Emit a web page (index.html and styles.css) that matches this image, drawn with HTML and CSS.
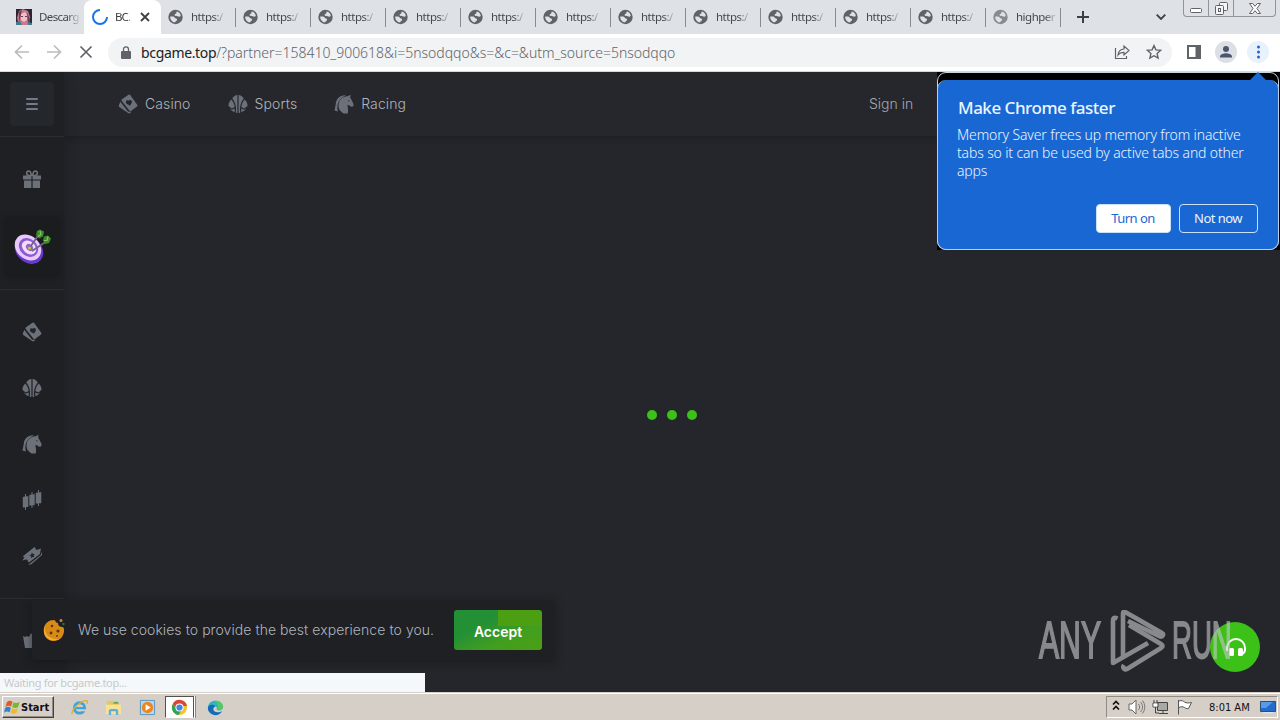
FILE: index.html
```
<!DOCTYPE html>
<html lang="en">

<head>
    <meta charset="UTF-8">
    <meta name="viewport" content="width=device-width, initial-scale=1.0">
    <title>BC.GAME</title>
    <link rel="stylesheet" href="styles.css">
</head>

<body>
    <!-- shared icons -->
    <svg class="sprite" aria-hidden="true">
        <symbol id="globe" viewBox="0 0 16 16">
            <circle cx="7.500" cy="8" r="7.200" fill="currentColor"/>
            <path d="M2.200 7.500c1.500.2 2.600-.2 3.600.3 1.100.5 1 1.600 2.200 1.700 1.200.2 1.300 1 .8 1.900-.5.800-1.500.8-1.700 2.100C4.300 13.200 2 10.700 2.200 7.500zM8.700 2.600c2.200.5 3.900 2.200 4.100 4.400-1.200.9-2 .7-3.200.2-.9-.4-2.600-.1-3-1-.4-1 1-1 1.600-1.600.5-.5 0-1.200.5-2z" fill="#dee1e6"/>
        </symbol>
        <symbol id="cards" viewBox="0 0 20 20">
            <path d="M2.300 7.700.8 11.600c-.2.600 0 1.100.5 1.500l8.800 6c.6.400 1.200.4 1.800 0l1.900-1.400-3 .1c-.6 0-1-.2-1.300-.7z" fill="currentColor"/>
            <path d="M4 5.200 10.500.8c.6-.4 1.300-.3 1.700.3l7 9.700c.4.600.3 1.200-.2 1.700l-6 4.400c-.6.400-1.300.3-1.700-.3L3.700 7c-.4-.7-.3-1.300.3-1.800z" fill="currentColor"/>
            <path d="M8.200 9.200c-1.100-2 .9-3.800 2.500-2.400 1.200-1.700 3.700-.6 3.200 1.500-.3 1.200-1.300 2-1.900 3.400-1.300-1-3-1.200-3.800-2.500z" class="cut"/>
        </symbol>
        <symbol id="ball" viewBox="0 0 20 20">
            <path d="M9.400 1v18l-1.600-.3c.8-5-.2-10.200-3.500-14.100C5.700 2.300 7.200 1.200 9.400 1zM10.600 1v18l1.600-.3c-.8-5 .2-10.200 3.500-14.100C14.300 2.300 12.800 1.200 10.600 1z" fill="currentColor"/>
            <path d="M3.300 5.500c2 2.300 3.100 4.800 3.400 7.500l-2.900 1.500L.5 12C.3 9.500 1.400 7.200 3.300 5.500zM16.700 5.500c-2 2.300-3.100 4.800-3.400 7.500l2.900 1.500 3.300-2.500c.2-2.500-.9-4.800-2.800-6.500zM1.600 14.200l2 1.600 3.100-1.400v3.800c-2-.7-4.100-2.200-5.100-4zM18.400 14.200l-2 1.600-3.100-1.400v3.800c2-.7 4.100-2.200 5.100-4z" fill="currentColor"/>
        </symbol>
        <symbol id="horse" viewBox="0 0 20 20">
            <path d="M6.500 5.500c2.200-2.700 5-3.400 7.200-3.300L16.500.7l-.3 3c1.500 1.700 2.100 4.100 3.300 6.200.4 1-.3 2.600-1.400 2.800-1.800.2-2.700-1.500-4.600-1.900 0 3.300 1.300 4.800.2 8.600h-4C6.500 17.500 4.400 15.500 4.500 11.500c0-2.500.8-4.500 2-6z" fill="currentColor"/>
            <path d="M12 1.200C6.300.6 2 4.500 1.800 9.800L.5 16.500l3.500 1C2.200 12 4 4.500 12 1.200z" fill="currentColor"/>
            <path d="m14 6.100 2 .8-1.300.6z" class="cut"/>
        </symbol>
        <symbol id="candles" viewBox="0 0 20 20">
            <path d="M3 4h1v2.400l2.300-.4v11H4v3H3v-2.500H.800V7L3 6.600zM9.500 2h1v2.400l2.200-.4v11.200h-2.200V18h-1v-2.400h-2.200V5l2.200-.4zM16 0h1v2.400l2.300-.4v11.300H17V16h-1v-2.500h-2.300V3l2.300-.4z" fill="currentColor"/>
        </symbol>
        <symbol id="ticket" viewBox="0 0 20 20">
            <path d="M.5 10.500 12.500 1l1 1.300c-.2 1 .8 1.900 1.900 1.500l3.500-1.300-1 5.500L7 16.600l-1.300-1.500c.2-1-.8-1.900-1.800-1.500L.5 14.500l2-3.600z" fill="currentColor"/>
            <path d="M6 18.500h3L20 9V5.500L18.700 9 8 17.500z" fill="currentColor"/>
            <path d="m10 6.500.9 1.600 1.900-.2-1.100 1.600.6 1.600-1.800-.2-1.300 1.300-.2-1.900-1.700-.7 1.700-.9z" class="cut"/>
        </symbol>
    </svg>

    <div class="tab-strip">
        <div class="tab tab-first">
            <svg class="favicon" viewBox="0 0 16 16">
                <path fill="#2c2535" d="M0 0h16v16H0z"/>
                <path fill="#c6798f" d="M3 2 7 0l5 2 2 6-1 8H3L1 9z"/>
                <path fill="#efc0c0" d="M5 5l4-2 2 3v5l-3 2-3-2z"/>
                <path fill="#673c58" d="M5 7h2v1H5zM9 7h2v1H9zM3 3l3-2-2 8-1 5zM11 3l3 8-2 4z"/>
                <path fill="#47798c" d="M0 13l4-1 2 4H0zM12 13l4 1v2h-4z"/>
            </svg>
            <span class="tab-name">Descarg</span>
        </div>
        <div class="tab tab-active">
            <svg class="favicon spinner" viewBox="0 0 16 16"><path d="M8 1a7 7 0 1 0 7 7" fill="none" stroke="#1a73e8" stroke-width="2"/></svg>
            <span class="tab-name">BC.</span>
            <svg class="tab-close" viewBox="0 0 10 10"><path d="m1 1 8 8M9 1 1 9" stroke="#3c4043" stroke-width="1.800"/></svg>
        </div>
        <div class="tab"><svg class="favicon"><use href="#globe"/></svg><span class="tab-name">https:/</span></div>
        <div class="tab"><svg class="favicon"><use href="#globe"/></svg><span class="tab-name">https:/</span></div>
        <div class="tab"><svg class="favicon"><use href="#globe"/></svg><span class="tab-name">https:/</span></div>
        <div class="tab"><svg class="favicon"><use href="#globe"/></svg><span class="tab-name">https:/</span></div>
        <div class="tab"><svg class="favicon"><use href="#globe"/></svg><span class="tab-name">https:/</span></div>
        <div class="tab"><svg class="favicon"><use href="#globe"/></svg><span class="tab-name">https:/</span></div>
        <div class="tab"><svg class="favicon"><use href="#globe"/></svg><span class="tab-name">https:/</span></div>
        <div class="tab"><svg class="favicon"><use href="#globe"/></svg><span class="tab-name">https:/</span></div>
        <div class="tab"><svg class="favicon"><use href="#globe"/></svg><span class="tab-name">https:/</span></div>
        <div class="tab"><svg class="favicon"><use href="#globe"/></svg><span class="tab-name">https:/</span></div>
        <div class="tab"><svg class="favicon"><use href="#globe"/></svg><span class="tab-name">https:/</span></div>
        <div class="tab"><svg class="favicon faded"><use href="#globe"/></svg><span class="tab-name">highper</span></div>
        <svg class="new-tab" viewBox="0 0 12 12"><path d="M6 0v12M0 6h12" stroke="#3c4043" stroke-width="2"/></svg>
        <svg class="tab-search" viewBox="0 0 10 6"><path d="m.7.700 4.300 4.300L9.300.7" fill="none" stroke="#3c4043" stroke-width="1.800"/></svg>
        <div class="window-buttons">
            <span><svg width="12" height="5"><rect x=".5" y=".5" width="11" height="4" rx="1" fill="#fff" stroke="#606369"/></svg></span>
            <span><svg width="13" height="13" fill="#f4f5f7" stroke="#606369"><rect x="4.500" y=".5" width="8" height="8" rx="1"/><rect x=".5" y="3.500" width="8" height="9" rx="1"/><rect x="3.500" y="6.500" width="2" height="3"/></svg></span>
            <span class="wide"><svg width="12" height="11"><path d="M.5.500h3.200L6 3.300 8.300.500h3.200L7.900 5.500l3.600 5H8.300L6 7.700l-2.300 2.800H.5l3.600-5z" fill="#fff" stroke="#606369"/></svg></span>
        </div>
    </div>

    <div class="toolbar">
        <svg class="nav-icon" viewBox="0 0 16 16"><path d="M15 8H2M8 1.500 1.500 8 8 14.500" stroke="#babcbe"/></svg>
        <svg class="nav-icon" viewBox="0 0 16 16"><path d="M1 8h13M8 1.500 14.500 8 8 14.500" stroke="#babcbe"/></svg>
        <svg class="nav-icon nav-stop" viewBox="0 0 16 16"><path d="m2.500 2.500 11 11M13.500 2.500l-11 11" stroke="#5f6368"/></svg>
        <div class="omnibox">
            <svg class="lock" viewBox="0 0 10 13"><path d="M1 5h8a1 1 0 0 1 1 1v6a1 1 0 0 1-1 1H1a1 1 0 0 1-1-1V6a1 1 0 0 1 1-1z" fill="#5f6368"/><path d="M2.500 6V3.300a2.500 2.500 0 0 1 5 0V6" fill="none" stroke="#5f6368" stroke-width="1.300"/></svg>
            <div class="url"><b>bcgame.top</b>/?partner=158410_900618&amp;i=5nsodqqo&amp;s=&amp;c=&amp;utm_source=5nsodqqo</div>
            <svg class="share" viewBox="0 0 16 16" fill="none" stroke="#5f6368" stroke-width="1.200"><path d="M1.500 4v10.500h11V12M4 11c.5-4 2.500-5.800 6-6V2l5 4.500-5 4.500V8.300C7.500 8.300 5.500 9 4 11z"/></svg>
            <svg class="star" viewBox="0 0 16 16"><path d="m8 1.600 1.900 4.300 4.700.5-3.500 3.100 1 4.600L8 11.700l-4.100 2.400 1-4.600-3.500-3.100 4.700-.5z" fill="none" stroke="#5f6368" stroke-width="1.400"/></svg>
        </div>
        <svg class="side-panel" viewBox="0 0 14 14"><path d="M1 1h12v12H1z" fill="none" stroke="#5f6368" stroke-width="2"/><path d="M8.500 1H13v12H8.500z" fill="#5f6368"/></svg>
        <svg class="profile" viewBox="0 0 22 22"><circle cx="11" cy="11" r="11" fill="#dcdfe4"/><circle cx="11" cy="8" r="3" fill="#4b5470"/><path d="M5 16.500v-1c0-2.200 4-3.300 6-3.300s6 1.100 6 3.300v1z" fill="#4b5470"/></svg>
        <svg class="kebab" viewBox="0 0 22 22"><circle cx="11" cy="11" r="11" fill="#e9f1fc"/><g fill="#1a66d6"><circle cx="11.500" cy="6" r="1.500"/><circle cx="11.500" cy="11" r="1.500"/><circle cx="11.500" cy="16" r="1.500"/></g></svg>
    </div>

    <div class="page">
        <aside class="sidebar">
            <div class="menu-cell">
                <div class="menu-btn"><i></i><i></i><i></i></div>
            </div>
            <div class="bonus-cell">
                <svg class="side-icon" viewBox="0 0 20 20" fill="currentColor"><path d="M1 6.500h8.400v4H1zM10.600 6.500H19v4h-8.400zM2 11.500h7.400V19H2zM10.600 11.500H18V19h-7.400z"/><path d="M9.400 6.500H6.800C4 6.300 4 2.200 6.500 2c1.800 0 2.600 2 2.900 4.500zM10.600 6.500h2.600c2.800-.2 2.800-4.300.3-4.500-1.800 0-2.600 2-2.900 4.500z" fill="none" stroke="currentColor" stroke-width="1.600"/></svg>
                <div class="target">
                    <svg viewBox="0 0 40 36">
                        <ellipse cx="17" cy="21" rx="12.500" ry="15.500" transform="rotate(-48 17 21)" fill="#6938cc"/>
                        <ellipse cx="16" cy="18.500" rx="11.500" ry="14.500" transform="rotate(-48 16 18.500)" fill="#e8cafa"/>
                        <ellipse cx="16.500" cy="18.500" rx="8.500" ry="10.500" transform="rotate(-48 16.500 18.500)" fill="#8c5bd2"/>
                        <ellipse cx="17" cy="18.500" rx="6" ry="8" transform="rotate(-48 17 18.500)" fill="#f2dbfc"/>
                        <ellipse cx="17.500" cy="18.500" rx="3" ry="4" transform="rotate(-48 17.500 18.500)" fill="#9168bd"/>
                        <path d="m17.500 19 9-13M20 22l15-10" stroke="#6d6680" stroke-width="1.800"/>
                        <path d="m24 6 1-4 3-1.500 4 2-1 5-4 2zM31 11.500l1-4 4-1 3 3-2 4.500-4 1z" fill="#408b2f"/>
                        <path d="m28 2 1 3.500-3 2M36 7.500l-1 4h-3" fill="none" stroke="#8dc36b" stroke-width="1.200"/>
                        <circle cx="17.500" cy="19" r="1.500" fill="#d9ba52"/>
                    </svg>
                </div>
            </div>
            <div class="games-cell">
                <svg class="side-icon"><use href="#cards"/></svg>
                <svg class="side-icon"><use href="#ball"/></svg>
                <svg class="side-icon"><use href="#horse"/></svg>
                <svg class="side-icon"><use href="#candles"/></svg>
                <svg class="side-icon"><use href="#ticket"/></svg>
            </div>
            <div class="more-cell">
                <svg class="side-icon" viewBox="0 0 20 20" fill="currentColor"><path d="M1 5l2 1 2-1 2 1 2-4 3 4 1-4 2 4 4-2-2 13H3z"/></svg>
            </div>
        </aside>

        <div class="content">
            <header class="header">
                <nav class="menu">
                    <a class="menu-item"><svg><use href="#cards"/></svg><span>Casino</span></a>
                    <a class="menu-item"><svg><use href="#ball"/></svg><span>Sports</span></a>
                    <a class="menu-item"><svg><use href="#horse"/></svg><span>Racing</span></a>
                </nav>
                <a class="sign-in">Sign in</a>
            </header>
            <main class="loading"><i></i><i></i><i></i></main>
        </div>

        <div class="cookie-bar">
            <svg class="cookie" viewBox="0 0 24 24">
                <path d="M11 2c2 0 1 3 4 3 0 3 2 4 5 4 2 2 1 7-1 10-3 4-9 5-13 3S0 15 1 10s5-8 10-8z" fill="#d88a17"/>
                <path d="M10 2C4 3 2 7 2 11c0 7 7 11 14 10-7 4-15-1-15-8 0-6 4-10 9-11z" fill="#f5ad32"/>
                <g fill="#61320d"><circle cx="9" cy="8" r="1.300"/><circle cx="8" cy="15" r="1.400"/><circle cx="15" cy="13" r="1.600"/><circle cx="14" cy="18" r=".9"/></g>
                <circle cx="18" cy="2.500" r="1.500" fill="#c9854a"/><circle cx="20.500" cy="6" r="1.200" fill="#386b36"/>
            </svg>
            <span class="cookie-text">We use cookies to provide the best experience to you.</span>
            <button class="accept">Accept</button>
        </div>

        <div class="support">
            <svg viewBox="0 0 22 20"><path d="M2 14v-3a9 9 0 0 1 18 0v2c0 2-1 3-3 4" fill="none" stroke="#fff" stroke-width="2"/><rect x="4" y="11" width="5" height="8" rx="1.500" fill="#fff"/><rect x="13" y="11" width="5" height="8" rx="1.500" fill="#fff"/></svg>
        </div>

        <!-- recorder watermark -->
        <div class="watermark">
            <span class="wm-word">ANY</span>
            <svg viewBox="0 0 56 62" fill="none" stroke="currentColor" stroke-width="4.600" stroke-linejoin="round">
                <path d="M7.500 8.500C4 7 3 8 3 11v42l35-20"/>
                <path d="M13 47V3.500c0-2 1-2 3-1L52 23c2 1 1 4-2 3.500L18 11"/>
                <path d="m14 55c-2 3 1 5 3 4l34-21c2-1 2-3 0-4L19 15"/>
            </svg>
            <span class="wm-word wm-run">RUN</span>
        </div>

        <div class="status-bubble">Waiting for bcgame.top...</div>

        <div class="promo">
            <div class="promo-card">
                <h2>Make Chrome faster</h2>
                <p>Memory Saver frees up memory from inactive<br>tabs so it can be used by active tabs and other<br>apps</p>
                <div class="promo-actions">
                    <button class="promo-btn filled">Turn on</button>
                    <button class="promo-btn">Not now</button>
                </div>
            </div>
        </div>
    </div>

    <footer class="taskbar">
        <div class="start">
            <svg viewBox="0 0 18 16"><path d="M3 3c2-2 4-2 6-.5L7.500 7.500c-2-1.300-4-1-6 .5z" fill="#e25a25"/><path d="M10 3c2 1.200 4 1.200 6.500-.5L15 8c-2 1.300-4 1.300-6.300 0z" fill="#78b82c"/><path d="M1.200 9c2-1.500 4-1.500 6-.3L6 13.500c-2-1.200-4-1-6 .5z" fill="#3083ce"/><path d="M8.500 9.200c2 1.200 4 1.200 6.300 0L13.300 14c-2 1.500-4 1.300-6.300.2z" fill="#f2ba25"/></svg>
            <span>Start</span>
        </div>
        <div class="quick-launch">
            <span><svg viewBox="0 0 18 18"><circle cx="9" cy="9.500" r="5.500" fill="none" stroke="#3ba5dd" stroke-width="3"/><path d="M5 8.500h9v2.300H5z" fill="#3ba5dd"/><path d="M11.500 11h5v2h-5z" fill="#d6cfc7"/><path d="M1.500 16C-1 12 12 0 17 2c1 .6.500 2-.500 3" fill="none" stroke="#e6ae28" stroke-width="1.400"/></svg></span>
            <span><svg viewBox="0 0 18 18"><path d="M2 4V2h6l1 2h6v4H2z" fill="#e7c65b"/><path d="M1 6h16v10H1z" fill="#f6e395"/><path d="M4 12c0-2 10-2 10 0v5h-2.500v-4h-5v4H4z" fill="#5faede"/><path d="M9 3h5v2H9z" fill="#5aaa62"/></svg></span>
            <span><svg viewBox="0 0 18 18"><path d="M1.500 1.500h15v15h-15z" fill="#b9d7ec" stroke="#5793c1"/><circle cx="9" cy="9" r="6" fill="#ee861b"/><path d="m7 5.500 5.500 3.500L7 12.500z" fill="#fff"/></svg></span>
            <span class="running"><svg viewBox="0 0 18 18"><circle cx="9" cy="9" r="8" fill="#f3c22c"/><path d="M2 5a8 8 0 0 1 14.900 2.500H9L5.500 10z" fill="#dc4437"/><path d="M2 5a8 8 0 0 0 6 12l3.500-6L5.500 10z" fill="#36a152"/><circle cx="9" cy="9" r="4.300" fill="#fff"/><circle cx="9" cy="9" r="3.300" fill="#4285e8"/></svg></span>
            <span><svg viewBox="0 0 18 18"><path d="M1 9C1 0 15-1 17 8c0 4-4 5-7 3.500 1-1 .500-3.500-2-4C5 7 2 8 1 9z" fill="#2fb4c3"/><path d="M8 2c6-1 10 4 9 7-1 2-3 3-6 2.500C12 9 12 4 8 2z" fill="#55c863"/><path d="M1 9c1-3 6-4 8-1-4 1-3 7 4 6l3-1c-5 8-16 3-15-4z" fill="#146bb6"/></svg></span>
        </div>
        <div class="tray">
            <svg class="chevrons" viewBox="0 0 8 11"><path d="m1 4.500 3-3 3 3M1 9.500l3-3 3 3" fill="none" stroke="#111" stroke-width="1.700"/></svg>
            <svg class="tray-icon" viewBox="0 0 18 16"><path d="M1 5h3l4-4v14l-4-4H1z" fill="#fff" stroke="#666"/><path d="M10.500 5c1.500 2 1.500 4 0 6M12.500 3c2.700 3 2.700 7 0 10M14.500 1.500c3 4 3 9 0 13" fill="none" stroke="#777"/></svg>
            <svg class="tray-icon" viewBox="0 0 18 16"><path d="M5.500 3.500h10v8h-10z" fill="#a8a8a5" stroke="#444"/><path d="M7 14.500h9M11 12v2M2 1v3M5 1v3M1 4h5v4H1zM3.500 8v6H7" fill="none" stroke="#444"/><path d="M1.500 4.500h4v3h-4z" fill="#fff"/></svg>
            <svg class="tray-icon" viewBox="0 0 18 16"><path d="M2.500 1v14.500M3 2c3-1 4 0 5.500 1 2 1.400 4 1 7 .5l-3 6c-2 .4-3-.2-4-1C7 7.500 5 7.500 3 8.500" fill="#fff" stroke="#555"/></svg>
            <span class="clock">8:01 AM</span>
            <svg class="desktop" viewBox="0 0 16 14"><path d="M.5 1.500h15v10H.5z" fill="#246bcc" stroke="#304d74"/><path d="M1 2h12L6 8H1z" fill="#559bea"/><path d="M3 12h10v1.500H3z" fill="#d7e3ed"/></svg>
        </div>
    </footer>
</body>

</html>
```
FILE: styles.css
```
:root {
    --page-bg: #24262b;
    --side-bg: #1e2024;
    --icon: #6b7079;
    --blue: #1967d2;
    --green: #3bc117;
    --ui-font: 'Noto Sans', 'Open Sans', sans-serif;
    --site-font: Inter, 'Liberation Sans', sans-serif;
}

* {
    box-sizing: border-box;
}

body {
    margin: 0;
    width: 1280px;
    height: 720px;
    overflow: hidden;
    display: flex;
    flex-direction: column;
    font-family: var(--ui-font);
}

svg {
    display: block;
    flex: none;
}

button {
    font-family: inherit;
}

.sprite {
    position: absolute;
    width: 0;
    height: 0;
}

/* tabs */
.tab-strip {
    height: 34px;
    flex: none;
    display: flex;
    background: #dee1e6;
}

.tab {
    position: relative;
    width: 75px;
    height: 34px;
    flex: none;
    display: flex;
    align-items: center;
    padding-left: 7px;
    color: #45484d;
    font-size: 12px;
}

.tab::after {
    content: '';
    position: absolute;
    right: 0;
    top: 8px;
    width: 1px;
    height: 19px;
    background: #888b91;
}

.tab-first {
    width: 84px;
    padding-left: 16px;
}

.tab-active {
    width: 77px;
    padding-left: 8px;
    background: #fff;
    border-radius: 8px 8px 0 0;
    color: #3c4043;
}

.tab-first::after,
.tab-active::after {
    display: none;
}

.favicon {
    width: 16px;
    height: 16px;
    margin-right: 7px;
    color: #5f6368;
}

.faded {
    color: #878a8f;
}

/* names fade out at the end */
.tab-name {
    white-space: nowrap;
    font-size: 11.5px;
    letter-spacing: -0.5px;
    padding: 0 1px 2px 0;
    -webkit-mask-image: linear-gradient(90deg, #000 70%, rgba(0, 0, 0, 0.15));
    mask-image: linear-gradient(90deg, #000 70%, rgba(0, 0, 0, 0.15));
}

.tab-first .tab-name {
    width: 40px;
    letter-spacing: -0.6px;
}

.tab-active .tab-name {
    width: 17px;
    letter-spacing: -0.9px;
}

.tab-close {
    width: 10px;
    height: 10px;
    margin-left: 8px;
}

.new-tab {
    width: 12px;
    height: 12px;
    margin: 11px 0 0 16px;
}

.tab-search {
    width: 10px;
    height: 6px;
    margin: 14px 17px 0 auto;
}

.window-buttons {
    display: flex;
    width: 93px;
    height: 17px;
    margin-right: 4px;
    border: 1px solid #91949a;
    border-top: 0;
    border-radius: 0 0 4px 4px;
}

.window-buttons span {
    width: 25px;
    display: flex;
    align-items: center;
    justify-content: center;
    border-right: 1px solid #91949a;
}

.window-buttons span:first-child {
    padding-top: 4px;
}

.window-buttons .wide {
    flex: 1;
    border: 0;
}

/* address row */
.toolbar {
    height: 38px;
    flex: none;
    display: flex;
    align-items: center;
    padding: 0 11px 1px 14px;
    background: #fff;
    border-bottom: 1px solid #d5d7da;
}

.nav-icon {
    width: 16px;
    height: 16px;
    margin-right: 16px;
    fill: none;
    stroke-width: 1.7;
}

.nav-stop {
    margin-right: 14px;
}

.omnibox {
    flex: 1;
    height: 29px;
    margin-right: 15px;
    padding: 0 10px 0 13px;
    display: flex;
    align-items: center;
    background: #f1f3f4;
    border-radius: 15px;
}

.lock {
    width: 10px;
    height: 13px;
}

.url {
    flex: 1;
    margin-left: 10px;
    font-size: 14px;
    font-weight: 300;
    color: #606469;
    letter-spacing: -0.02px;
    white-space: nowrap;
}

.url b {
    font-weight: 400;
    letter-spacing: -0.35px;
    color: #202124;
}

.share,
.star {
    width: 16px;
    height: 16px;
    margin-left: 16px;
}

.side-panel {
    width: 14px;
    height: 14px;
}

.profile,
.kebab {
    width: 22px;
    height: 22px;
    margin-left: 14px;
}

.kebab {
    margin-left: 10px;
}

/* site */
.page {
    position: relative;
    height: 620px;
    flex: none;
    display: flex;
    background: var(--page-bg);
    font-family: var(--site-font);
    overflow: hidden;
}

.cut {
    fill: #22252a;
}

.sidebar {
    width: 64px;
    flex: none;
    background: var(--side-bg);
    color: var(--icon);
    box-shadow: 0 0 14px rgba(20, 22, 25, 0.45);
    z-index: 1;
}

.menu-cell {
    height: 65px;
    padding: 10px;
    border-bottom: 1px solid #2b2d31;
}

.menu-btn {
    width: 44px;
    height: 44px;
    display: flex;
    flex-direction: column;
    align-items: center;
    justify-content: center;
    gap: 2px;
    background: #24272c;
    border-radius: 4px;
}

.menu-btn i {
    width: 12px;
    height: 2px;
    margin-bottom: 1px;
    background: #747983;
    border-radius: 1px;
}

.side-icon {
    width: 20px;
    height: 20px;
}

.bonus-cell {
    height: 153px;
    padding-top: 32px;
    display: flex;
    flex-direction: column;
    align-items: center;
    gap: 28px;
    border-bottom: 1px solid #2b2d31;
}

.target {
    width: 56px;
    height: 60px;
    padding: 12px 8px;
    background: #1a1c1e;
    border-radius: 5px;
    box-shadow: 0 0 5px #1a1c1e;
}

.target svg {
    width: 40px;
    height: 36px;
    overflow: visible;
}

.games-cell {
    height: 309px;
    padding-top: 32px;
    display: flex;
    flex-direction: column;
    align-items: center;
    gap: 36px;
    border-bottom: 1px solid #2b2d31;
}

.more-cell {
    padding: 32px 22px;
}

.content {
    flex: 1;
    display: flex;
    flex-direction: column;
}

.header {
    height: 64px;
    padding-left: 54px;
    display: flex;
    align-items: center;
    background: #25272c;
    box-shadow: 0 2px 6px rgba(20, 22, 25, 0.45);
    color: #b0b3ba;
    font-size: 14px;
    font-weight: 300;
}

.menu {
    display: flex;
    gap: 37px;
    width: 751px;
}

.menu-item {
    display: flex;
    align-items: center;
    gap: 7px;
    letter-spacing: 0.1px;
}

.menu-item svg {
    width: 20px;
    height: 20px;
    color: var(--icon);
}

.menu-item span {
    height: 18px;
}

.sign-in {
    height: 18px;
    color: #a4a8b0;
}

.loading {
    flex: 1;
    display: flex;
    align-items: center;
    justify-content: center;
    gap: 10px;
    padding-top: 2px;
}

.loading i {
    width: 10px;
    height: 10px;
    background: var(--green);
    border-radius: 50%;
}

/* floating things */
.cookie-bar {
    position: absolute;
    left: 32px;
    top: 528px;
    width: 523px;
    height: 60px;
    padding: 0 13px 0 11px;
    display: flex;
    align-items: center;
    background: #1e2024;
    border-radius: 4px;
    box-shadow: 0 2px 8px rgba(15, 17, 19, 0.5);
    z-index: 2;
}

.cookie {
    width: 24px;
    height: 24px;
}

.cookie-text {
    margin: -1px 0 0 11px;
    font-size: 14px;
    font-weight: 300;
    color: #b0b4bd;
    letter-spacing: 0.06px;
    white-space: nowrap;
}

.accept {
    width: 88px;
    height: 40px;
    margin-left: auto;
    padding: 2px 0 0;
    border: 0;
    border-radius: 3px;
    background: linear-gradient(90deg, transparent 50%, #4c9f13 50%) 0 0 / 100% 16px no-repeat, linear-gradient(155deg, #249035 35%, #409e20 65%, #4c9f13);
    color: #fff;
    font-size: 14px;
    font-weight: 600;
}

.support {
    position: absolute;
    left: 1210px;
    top: 550px;
    width: 50px;
    height: 50px;
    display: flex;
    align-items: center;
    justify-content: center;
    padding-left: 2px;
    background: var(--green);
    border-radius: 50%;
}

.support svg {
    width: 22px;
    height: 20px;
}

.watermark {
    position: absolute;
    left: 1039px;
    top: 538px;
    display: flex;
    align-items: center;
    color: #c5c7ca;
    opacity: 0.62;
}

.watermark svg {
    width: 56px;
    height: 62px;
    margin: 0 6px 0 9px;
}

.wm-word {
    width: 62px;
    font-family: 'Liberation Sans', sans-serif;
    font-size: 52px;
    line-height: 60px;
    padding-bottom: 2px;
    transform: scaleX(0.58);
    transform-origin: left;
    -webkit-text-stroke: 1.8px currentColor;
}

.wm-run {
    transform: scaleX(0.53);
}

.status-bubble {
    position: absolute;
    left: 0;
    bottom: 0;
    width: 425px;
    height: 19px;
    padding-left: 4px;
    background: #f5f8fa;
    color: #c6c9cc;
    font-family: var(--ui-font);
    font-size: 11px;
    line-height: 20px;
    letter-spacing: -0.32px;
    z-index: 3;
}

.promo {
    position: absolute;
    left: 937px;
    top: 0;
    width: 343px;
    height: 178px;
    padding: 8px 1px 0 0;
    background: #000;
    font-family: var(--ui-font);
    z-index: 3;
}

/* thin frame left round the bubble */
.promo::before {
    content: '';
    position: absolute;
    inset: 0 1px 0 0;
    border: 1px solid #c6d7e0;
    border-radius: 9px;
}

.promo::after {
    content: '';
    position: absolute;
    left: 313px;
    top: 0;
    border: 8px solid transparent;
    border-top: 0;
    border-bottom-color: var(--blue);
}

.promo-card {
    position: relative;
    height: 170px;
    padding: 17px 20px 0;
    background: var(--blue);
    border: 1px solid #b7d0e8;
    border-top: 0;
    border-radius: 9px;
    color: #eaf5ff;
}

.promo h2 {
    margin: 0;
    font-size: 17px;
    line-height: 22px;
    font-weight: 500;
    letter-spacing: -0.48px;
}

.promo p {
    margin: 7px 0 0 -1px;
    font-size: 14px;
    font-weight: 300;
    line-height: 18px;
    letter-spacing: -0.14px;
    white-space: nowrap;
}

.promo-actions {
    display: flex;
    justify-content: flex-end;
    gap: 8px;
    margin-top: 24px;
}

.promo-btn {
    width: 79px;
    height: 29px;
    padding: 0 1px 1px 0;
    background: var(--blue);
    border: 1px solid #c9e2fa;
    border-radius: 4px;
    color: #eaf5ff;
    font-size: 13px;
    letter-spacing: -0.55px;
}

.promo-btn.filled {
    width: 75px;
    background: #fff;
    color: var(--blue);
}

/* windows taskbar */
.taskbar {
    height: 28px;
    flex: none;
    display: flex;
    padding: 3px 2px 2px;
    background: #d6cfc7;
    border-top: 1px solid #d6cfc7;
    box-shadow: inset 0 1px #fff;
    font-family: 'DejaVu Sans Condensed', sans-serif;
    font-size: 11px;
    color: #111;
}

.start {
    width: 52px;
    height: 22px;
    padding-left: 1px;
    display: flex;
    align-items: center;
    border: 1px solid;
    border-color: #fff #44413e #44413e #fff;
    box-shadow: inset -1px -1px #918c86;
    font-weight: 700;
}

.start svg {
    width: 17px;
    height: 16px;
}

.quick-launch {
    display: flex;
    margin-left: 8px;
}

.quick-launch span {
    width: 34px;
    height: 22px;
    display: flex;
    align-items: center;
    justify-content: center;
}

.quick-launch svg {
    width: 17px;
    height: 17px;
}

.quick-launch .running {
    width: 29px;
    margin: 0 4px 0 1px;
    padding-right: 1px;
    background: #fff;
    border: 1px solid;
    border-color: #55514d #55514d #fff #55514d;
    box-shadow: 1px 0 #fff, 2px 0 #8b867f;
}

.tray {
    width: 172px;
    height: 22px;
    margin-left: auto;
    padding: 0 1px 0 5px;
    display: flex;
    align-items: center;
    border: 1px solid;
    border-color: #908b85 #fff #fff #908b85;
}

.chevrons {
    width: 8px;
    height: 11px;
    margin-bottom: 3px;
}

.tray-icon {
    width: 18px;
    height: 16px;
    margin-left: 6px;
}

.tray .chevrons + .tray-icon {
    margin-left: 8px;
}

.clock {
    margin-left: 15px;
    white-space: nowrap;
}

.desktop {
    width: 16px;
    height: 14px;
    margin-left: auto;
}
```
